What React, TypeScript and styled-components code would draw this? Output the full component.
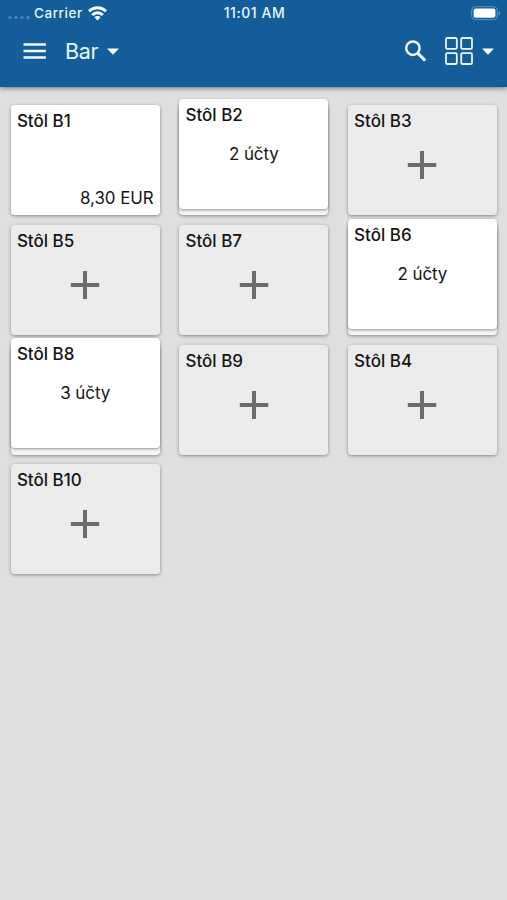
import React from "react";
import styled, { createGlobalStyle } from "styled-components";

const GlobalStyle = createGlobalStyle`
  * { box-sizing: border-box; }
  body {
    margin: 0;
    background: #dfdfdf;
    font-family: Inter, Roboto, sans-serif;
  }
`;

const Screen = styled.div`
  display: flex;
  flex-direction: column;
  height: 900px;
  overflow: hidden;
  background: #dfdfdf;
`;

const Header = styled.header`
  flex: none;
  height: 87.4px;
  background: #125d9a;
  color: #e9f6ff;
  box-shadow: 0 1px 5px rgba(0, 0, 0, 0.5);
`;

const StatusBar = styled.div`
  display: grid;
  grid-template-columns: 1fr auto 1fr;
  align-items: center;
  height: 26px;
  padding: 0 6px 0 8px;
  font-size: 13.5px;
  line-height: 26px;
  font-weight: 500;
`;

const Network = styled.div`
  display: flex;
  align-items: center;
`;

const Signal = styled.svg`
  margin: 9px 4px 0 0;
`;

const Carrier = styled.span`
  width: 50px;
  white-space: nowrap;
  letter-spacing: 0.55px;
`;

const Clock = styled.span`
  font-size: 14px;
  letter-spacing: 0.55px;
`;

const Battery = styled.svg`
  justify-self: end;
`;

const Toolbar = styled.div`
  display: flex;
  align-items: center;
  height: 50px;
  padding: 0 13.5px 0 23px;
`;

const IconButton = styled.button<{ $gap?: number }>`
  display: flex;
  padding: 0;
  margin: 0 ${(p) => p.$gap ?? 0}px 0 0;
  border: 0;
  background: none;
  color: inherit;
`;

const Title = styled.h1`
  margin: 0 8.5px 0 0;
  width: 33px;
  font-size: 21.5px;
  line-height: 26px;
  font-weight: 400;
  letter-spacing: -0.3px;
`;

const Spacer = styled.div`
  flex: 1;
`;

const Grid = styled.main`
  display: grid;
  grid-template-columns: repeat(3, 149.3px);
  grid-auto-rows: 110px;
  gap: 9.8px 19.3px;
  padding: 17.6px 10.6px;
`;

const Slot = styled.div<{ $stacked: boolean }>`
  border-radius: 4px;
  background: ${(p) => (p.$stacked ? "#f4f4f4" : "transparent")};
  box-shadow: 0 1px 3.5px rgba(0, 0, 0, 0.4);
`;

const Card = styled.article<{ $kind: Kind }>`
  display: flex;
  flex-direction: column;
  height: 110px;
  margin-top: ${(p) => (p.$kind === "stack" ? "-6.2px" : "0")};
  padding: 6px 6.3px;
  border-radius: 4px;
  background: ${(p) => (p.$kind === "empty" ? "#ebebeb" : "#fff")};
  box-shadow: ${(p) => (p.$kind === "stack" ? "0 1px 3px rgba(0, 0, 0, 0.4)" : "none")};
  color: #151515;
`;

const Name = styled.h2`
  margin: 0;
  font-size: 17px;
  line-height: 21px;
  font-weight: 500;
`;

const Accounts = styled.p`
  margin: 17px 0 0;
  text-align: center;
  font-size: 17px;
  line-height: 22px;
  letter-spacing: -0.1px;
`;

const Amount = styled.p`
  margin: auto 0 0;
  text-align: right;
  font-size: 16.9px;
  line-height: 22px;
  letter-spacing: -0.05px;
`;

const Plus = styled.svg`
  align-self: center;
  margin-top: 18px;
`;

type Kind = "open" | "stack" | "empty";
type Table = { name: string; kind: Kind; text?: string };

const tables: Table[] = [
  { name: "Stôl B1", kind: "open", text: "8,30 EUR" },
  { name: "Stôl B2", kind: "stack", text: "2 účty" },
  { name: "Stôl B3", kind: "empty" },
  { name: "Stôl B5", kind: "empty" },
  { name: "Stôl B7", kind: "empty" },
  { name: "Stôl B6", kind: "stack", text: "2 účty" },
  { name: "Stôl B8", kind: "stack", text: "3 účty" },
  { name: "Stôl B9", kind: "empty" },
  { name: "Stôl B4", kind: "empty" },
  { name: "Stôl B10", kind: "empty" },
];

const Caret = () => (
  <svg width="12" height="7" viewBox="0 0 12 7">
    <path d="M0 .5h12L6 6.7z" fill="#fff" />
  </svg>
);

const TableCard = ({ name, kind, text }: Table) => (
  <Slot $stacked={kind === "stack"}>
    <Card $kind={kind}>
      <Name>{name}</Name>
      {kind === "empty" && (
        <Plus width="30" height="30" viewBox="0 0 30 30">
          <path d="M15 1v28M.8 15h28.4" stroke="#6b6b6b" strokeWidth="4" />
        </Plus>
      )}
      {kind === "stack" && <Accounts>{text}</Accounts>}
      {kind === "open" && <Amount>{text}</Amount>}
    </Card>
  </Slot>
);

export default function App() {
  return (
    <Screen>
      <GlobalStyle />
      <Header>
        <StatusBar>
          <Network>
            <Signal width="22" height="5" viewBox="0 0 22 5" fill="#4a86b8">
              <circle cx="2" cy="2.5" r="1.7" />
              <circle cx="8" cy="2.5" r="1.7" />
              <circle cx="14" cy="2.5" r="1.7" />
              <circle cx="20" cy="2.5" r="1.7" />
            </Signal>
            <Carrier>Carrier</Carrier>
            <svg width="27" height="16" viewBox="0 0 27 16" fill="none" stroke="#fff" strokeWidth="2.8">
              <path d="M5 6.2a12.2 12.2 0 0 1 17 0M8.2 9.9a7.6 7.6 0 0 1 10.6 0" />
              <path d="M10.4 12.3a4.3 4.3 0 0 1 6.2 0l-3.1 3.1z" fill="#fff" stroke="none" />
            </svg>
          </Network>
          <Clock>11:01 AM</Clock>
          <Battery width="30" height="15" viewBox="0 0 30 15">
            <rect x=".7" y=".7" width="25.6" height="13" rx="3.8" fill="none" stroke="#5f97c5" />
            <rect x="2.6" y="2.6" width="21.8" height="9.2" rx="2" fill="#fff" />
            <path d="M27.6 5q1.6.7 1.6 2.2t-1.6 2.2z" fill="#5f97c5" />
          </Battery>
        </StatusBar>
        <Toolbar>
          <IconButton $gap={19} aria-label="Menu">
            <svg width="23" height="16" viewBox="0 0 23 16">
              <path d="M.5 1.4h22.3M.5 8h22.3M.5 14.6h22.3" stroke="#f4fbff" strokeWidth="2.5" />
            </svg>
          </IconButton>
          <Title>Bar</Title>
          <Caret />
          <Spacer />
          <IconButton $gap={18} aria-label="Search">
            <svg width="23" height="23" viewBox="0 0 23 23" fill="none" stroke="#f0f9ff">
              <circle cx="8.9" cy="8.2" r="6.7" strokeWidth="2.5" />
              <path d="M13.8 13.2l7.4 7.4" strokeWidth="3" />
            </svg>
          </IconButton>
          <IconButton $gap={8.5} aria-label="View">
            <svg width="28" height="28" viewBox="0 0 28 28" fill="none" stroke="#e7f6ff" strokeWidth="1.8">
              <rect x="1" y="1" width="10.8" height="10.8" rx="1.3" />
              <rect x="16.2" y="1" width="10.8" height="10.8" rx="1.3" />
              <rect x="1" y="16.2" width="10.8" height="10.8" rx="1.3" />
              <rect x="16.2" y="16.2" width="10.8" height="10.8" rx="1.3" />
            </svg>
          </IconButton>
          <Caret />
        </Toolbar>
      </Header>
      <Grid>
        {tables.map((t) => (
          <TableCard key={t.name} {...t} />
        ))}
      </Grid>
    </Screen>
  );
}
